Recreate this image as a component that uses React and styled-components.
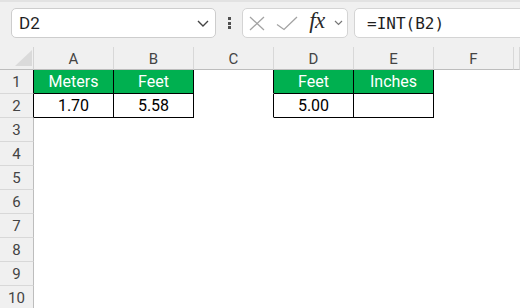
import React from "react";
import styled, { createGlobalStyle } from "styled-components";

const COLS = ["A", "B", "C", "D", "E", "F", ""];
const ROWS = [1, 2, 3, 4, 5, 6, 7, 8, 9, 10];

const cells = {
  A1: { value: "Meters", head: true },
  B1: { value: "Feet", head: true },
  A2: { value: "1.70" },
  B2: { value: "5.58" },
  D1: { value: "Feet", head: true },
  E1: { value: "Inches", head: true },
  D2: { value: "5.00" },
  E2: { value: "" },
};

const TABLE_COLS = ["A", "B", "D", "E"];

const App = () => {
  return (
    <>
      <GlobalStyle />
      <Window>
        {/* Formula bar */}
        <Toolbar>
          <NameBox>
            <NameText>D2</NameText>
            <svg width="12" height="7" viewBox="0 0 12 7">
              <path d="M1 1 L6 6 L11 1" fill="none" stroke="#444" strokeWidth="1.4" />
            </svg>
          </NameBox>
          <Grip>
            <Dot />
            <Dot />
            <Dot />
          </Grip>
          <FxButtons>
            <Slot $w={27}>
              <svg width="16" height="15" viewBox="0 0 16 15">
                <path d="M1 1 L15 14 M15 1 L1 14" stroke="#a3a3a3" strokeWidth="1.3" fill="none" />
              </svg>
            </Slot>
            <Slot $w={34}>
              <svg width="22" height="15" viewBox="0 0 22 15">
                <path d="M1 8.5 L8 13.5 L21 1" stroke="#a3a3a3" strokeWidth="1.3" fill="none" />
              </svg>
            </Slot>
            <Slot $w={26}>
              <FxText>fx</FxText>
            </Slot>
            <Slot $w={17}>
              <svg width="9" height="6" viewBox="0 0 9 6">
                <path d="M1 1 L4.5 4.5 L8 1" stroke="#777" strokeWidth="1.2" fill="none" />
              </svg>
            </Slot>
          </FxButtons>
          <FormulaInput>=INT(B2)</FormulaInput>
        </Toolbar>

        {/* Sheet */}
        <Sheet>
          <Corner />
          {COLS.map((c, i) => (
            <ColHead key={i}>{c}</ColHead>
          ))}
          {ROWS.map((r) => (
            <React.Fragment key={r}>
              <RowHead $boxed={r <= 2}>{r}</RowHead>
              {COLS.map((c, i) => {
                const cell = cells[c + r];
                const inTable = r <= 2 && TABLE_COLS.includes(c);
                return (
                  <Cell
                    key={i}
                    $fill={cell && cell.head}
                    $rightLine={r <= 2 && ["A", "B", "C", "D", "E"].includes(c)}
                    $bottomLine={inTable}
                  >
                    {cell ? cell.value : ""}
                  </Cell>
                );
              })}
            </React.Fragment>
          ))}
        </Sheet>
      </Window>
    </>
  );
};

const GlobalStyle = createGlobalStyle`
  html, body {
    margin: 0;
    padding: 0;
    background: #ffffff;
    overflow: hidden;
  }
  body {
    font-family: Roboto, "Noto Sans", sans-serif;
  }
`;

const Window = styled.div`
  width: 520px;
  height: 308px;
  overflow: hidden;
  background: #ffffff;
`;

const Toolbar = styled.div`
  box-sizing: border-box;
  height: 47px;
  display: flex;
  align-items: flex-start;
  padding: 6px 0 0 11px;
  background: #f0f0f0;
  border-top: 2px solid #e2e2e2;
`;

const NameBox = styled.div`
  box-sizing: border-box;
  width: 205px;
  height: 30px;
  display: flex;
  align-items: center;
  justify-content: space-between;
  padding: 0 6px 0 7px;
  background: #ffffff;
  border: 1px solid #cdcdcd;
  border-radius: 5px;
  flex-shrink: 0;
`;

const NameText = styled.span`
  font-size: 17px;
  color: #1f1f1f;
`;

const Grip = styled.div`
  width: 26px;
  height: 30px;
  display: flex;
  flex-direction: column;
  align-items: center;
  justify-content: center;
  gap: 1.5px;
  flex-shrink: 0;
`;

const Dot = styled.span`
  width: 3px;
  height: 3px;
  background: #505050;
`;

const FxButtons = styled.div`
  box-sizing: border-box;
  height: 30px;
  display: flex;
  align-items: center;
  background: #ffffff;
  border: 1px solid #d4d4d4;
  border-radius: 5px;
  flex-shrink: 0;
`;

const Slot = styled.div`
  width: ${(p) => p.$w}px;
  height: 100%;
  display: flex;
  align-items: center;
  justify-content: center;
`;

const FxText = styled.span`
  font-family: "Liberation Serif", "DejaVu Serif", serif;
  font-style: italic;
  font-size: 23px;
  color: #2a2a2a;
  letter-spacing: -0.5px;
  margin-top: -4px;
`;

const FormulaInput = styled.div`
  box-sizing: border-box;
  margin-left: 6px;
  width: 200px;
  height: 30px;
  display: flex;
  align-items: center;
  padding-left: 12px;
  flex-shrink: 0;
  background: #ffffff;
  border: 1px solid #d4d4d4;
  border-radius: 5px;
  font-family: "DejaVu Sans Mono", "Liberation Mono", monospace;
  font-size: 16px;
  color: #1f1f1f;
`;

const Sheet = styled.div`
  display: grid;
  grid-template-columns: 34px repeat(6, 80px) 1fr;
  grid-template-rows: 23px;
  grid-auto-rows: 24px;
`;

const Corner = styled.div`
  position: relative;
  box-sizing: border-box;
  background: #f0f0f0;
  border-right: 1px solid #d4d4d4;
  border-bottom: 1px solid #bdbdbd;
  &::after {
    content: "";
    position: absolute;
    right: 1px;
    bottom: 3px;
    width: 0;
    height: 0;
    border-left: 17px solid transparent;
    border-bottom: 16px solid #dadada;
  }
`;

const ColHead = styled.div`
  box-sizing: border-box;
  display: flex;
  align-items: center;
  justify-content: center;
  padding-top: 2px;
  background: #f0f0f0;
  border-right: 1px solid #d8d8d8;
  border-bottom: 1px solid #bdbdbd;
  font-size: 15px;
  color: #444444;
`;

const RowHead = styled.div`
  box-sizing: border-box;
  display: flex;
  align-items: center;
  justify-content: center;
  background: #f0f0f0;
  border-right: 1px solid ${(p) => (p.$boxed ? "#000000" : "#bdbdbd")};
  border-bottom: 1px solid #d8d8d8;
  font-size: 15px;
  color: #444444;
`;

const Cell = styled.div`
  box-sizing: border-box;
  display: flex;
  align-items: center;
  justify-content: center;
  background: ${(p) => (p.$fill ? "#00b050" : "#ffffff")};
  color: ${(p) => (p.$fill ? "#ffffff" : "#000000")};
  border-right: 1px solid ${(p) => (p.$rightLine ? "#000000" : "transparent")};
  border-bottom: 1px solid ${(p) => (p.$bottomLine ? "#000000" : "transparent")};
  font-size: 16px;
  white-space: nowrap;
`;

export default App;
